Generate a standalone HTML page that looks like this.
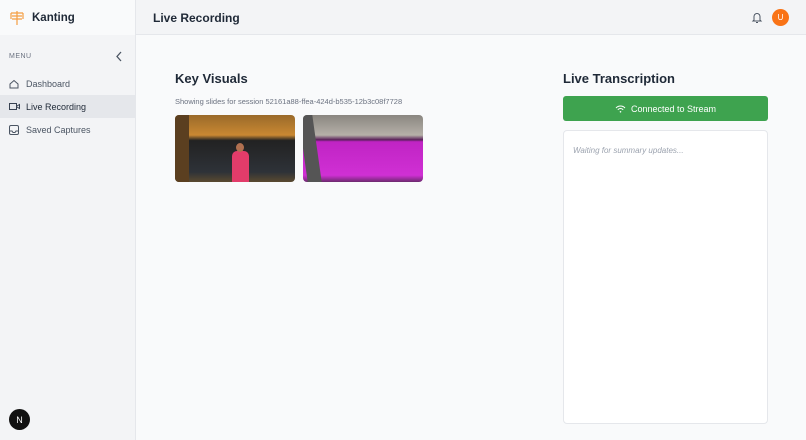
<!DOCTYPE html>
<html><head><style>
*{box-sizing:border-box;margin:0;padding:0}
body{width:806px;height:440px;overflow:hidden;font-family:"Liberation Sans",sans-serif;background:#f9fafb;position:relative;color:#1f2937}
.side{position:absolute;left:0;top:0;width:136px;height:440px;background:#f3f4f6;border-right:1px solid #e5e7eb}
.logo{height:35px;background:#f9fafb;display:flex;align-items:center;padding-left:9px;font-size:11.5px;font-weight:600;color:#1f2937}
.menu{font-size:7px;color:#6b7280;letter-spacing:.5px;position:absolute;left:9px;top:53px}
.item{position:absolute;left:0;width:136px;height:23px;display:flex;align-items:center;padding-left:26px;font-size:9px;color:#4b5563}
.item svg{position:absolute;left:9px}
.top{position:absolute;left:136px;top:0;right:0;height:35px;background:#f3f4f6;border-bottom:1px solid #e5e7eb}
h2{font-size:13px;font-weight:600;position:absolute}
</style></head><body>
<div class="side">
 <div class="logo"><svg width="16" height="16" viewBox="0 0 16 16" style="margin-right:7px"><g stroke="#f59e42" stroke-width="1.2" fill="none"><path d="M8 1v14M2 3h12M3 6h10M3 9h10M2 3v6M14 3v6"/></g></svg>Kanting</div>
 <div class="menu">MENU</div>
 <svg style="position:absolute;left:115px;top:51px" width="8" height="11" viewBox="0 0 8 11"><path d="M6 1L2 5.5 6 10" stroke="#4b5563" stroke-width="1.3" fill="none"/></svg>
 <div class="item" style="top:72px"><svg width="10" height="10" viewBox="0 0 10 10"><path d="M1 5L5 1.5 9 5V9H1Z" stroke="#4b5563" fill="none"/></svg>Dashboard</div>
 <div class="item" style="top:95px;background:#e5e7eb;color:#1f2937"><svg width="11" height="9" viewBox="0 0 11 9"><rect x=".5" y="1.5" width="7" height="6" stroke="#374151" fill="none"/><path d="M8 4l2.5-1.5v4L8 5" stroke="#374151" fill="none"/></svg>Live Recording</div>
 <div class="item" style="top:118px"><svg width="10" height="10" viewBox="0 0 10 10"><rect x=".5" y=".5" width="9" height="9" rx="1.5" stroke="#4b5563" fill="none"/><path d="M.5 6h2.5l1 1.5h2l1-1.5h2.5" stroke="#4b5563" fill="none"/></svg>Saved Captures</div>
 <div style="position:absolute;left:9px;top:409px;width:21px;height:21px;border-radius:50%;background:#111;color:#fff;font-size:9px;display:flex;align-items:center;justify-content:center">N</div>
</div>
<div class="top">
 <div style="position:absolute;left:17px;top:11px;font-size:12px;font-weight:600">Live Recording</div>
 <svg style="position:absolute;left:615px;top:11px" width="12" height="13" viewBox="0 0 12 13"><path d="M3 9V5.5a3 3 0 016 0V9l1 1H2z M5 11.5h2" stroke="#4b5563" fill="none"/></svg>
 <div style="position:absolute;left:636px;top:9px;width:17px;height:17px;border-radius:50%;background:#f97316;color:#fff;font-size:8px;display:flex;align-items:center;justify-content:center">U</div>
</div>
<h2 style="left:175px;top:71px">Key Visuals</h2>
<div style="position:absolute;left:175px;top:97px;font-size:7.5px;color:#6b7280">Showing slides for session 52161a88-ffea-424d-b535-12b3c08f7728</div>
<div style="position:absolute;left:175px;top:115px;width:120px;height:67px;border-radius:4px;overflow:hidden;background:linear-gradient(#9a6a2a,#c98832 30%,#222 38%,#2e3238 85%,#5a4a30)"><div style="position:absolute;left:0;top:0;width:14px;height:67px;background:#5b3f20"></div><div style="position:absolute;left:57px;top:36px;width:17px;height:31px;background:#e23c6a;border-radius:5px 5px 0 0"></div><div style="position:absolute;left:61px;top:28px;width:8px;height:9px;background:#b07050;border-radius:50%"></div></div>
<div style="position:absolute;left:303px;top:115px;width:120px;height:67px;border-radius:4px;overflow:hidden;background:linear-gradient(#8a8680,#b5b0a8 30%,#5a205a 37%,#c024c4 40%,#d030d4 90%,#6b2a6d)"><div style="position:absolute;left:0;top:0;width:14px;height:67px;background:#555;transform:skewX(8deg)"></div></div>
<h2 style="left:563px;top:71px">Live Transcription</h2>
<div style="position:absolute;left:563px;top:96px;width:205px;height:25px;background:#3ea34f;border-radius:3px;color:#fff;font-size:9px;display:flex;align-items:center;justify-content:center"><svg width="11" height="8" viewBox="0 0 11 8" style="margin-right:5px"><path d="M1 3a6 6 0 019 0M2.8 4.8a3.5 3.5 0 015.4 0" stroke="#fff" fill="none"/><circle cx="5.5" cy="6.8" r=".8" fill="#fff"/></svg>Connected to Stream</div>
<div style="position:absolute;left:563px;top:130px;width:205px;height:294px;background:#fff;border:1px solid #e5e7eb;border-radius:4px;padding:15px 9px;font-size:8px;font-style:italic;color:#9ca3af">Waiting for summary updates...</div>
</body></html>
